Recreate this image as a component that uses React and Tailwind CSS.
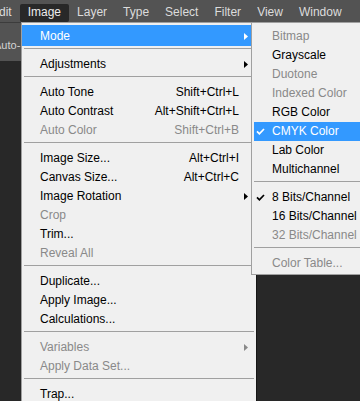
import React from 'react';

// top menu bar entries ("Edit" is cut off by the left edge)
const barItems = ['Edit', 'Image', 'Layer', 'Type', 'Select', 'Filter', 'View', 'Window'];

const SEP = { sep: true };

const imageMenu = [
  { label: 'Mode', arrow: true, active: true },
  SEP,
  { label: 'Adjustments', arrow: true },
  SEP,
  { label: 'Auto Tone', shortcut: 'Shift+Ctrl+L' },
  { label: 'Auto Contrast', shortcut: 'Alt+Shift+Ctrl+L' },
  { label: 'Auto Color', shortcut: 'Shift+Ctrl+B', disabled: true },
  SEP,
  { label: 'Image Size...', shortcut: 'Alt+Ctrl+I' },
  { label: 'Canvas Size...', shortcut: 'Alt+Ctrl+C' },
  { label: 'Image Rotation', arrow: true },
  { label: 'Crop', disabled: true },
  { label: 'Trim...' },
  { label: 'Reveal All', disabled: true },
  SEP,
  { label: 'Duplicate...' },
  { label: 'Apply Image...' },
  { label: 'Calculations...' },
  SEP,
  { label: 'Variables', arrow: true, disabled: true },
  { label: 'Apply Data Set...', disabled: true },
  SEP,
  { label: 'Trap...' },
];

const modeMenu = [
  { label: 'Bitmap', disabled: true },
  { label: 'Grayscale' },
  { label: 'Duotone', disabled: true },
  { label: 'Indexed Color', disabled: true },
  { label: 'RGB Color' },
  { label: 'CMYK Color', checked: true, active: true },
  { label: 'Lab Color' },
  { label: 'Multichannel' },
  SEP,
  { label: '8 Bits/Channel', checked: true },
  { label: '16 Bits/Channel' },
  { label: '32 Bits/Channel', disabled: true },
  SEP,
  { label: 'Color Table...', disabled: true },
];

const Arrow = ({ color }) => (
  <svg width="4" height="7" viewBox="0 0 4 7">
    <polygon points="0,0 4,3.5 0,7" fill={color} />
  </svg>
);

const Check = ({ color }) => (
  <svg width="9" height="7" viewBox="0 0 9 7">
    <path d="M1 3.3 L3.4 5.8 L8 1" fill="none" stroke={color} strokeWidth="1.7" />
  </svg>
);

const Separator = () => (
  <div className="h-[9px] pt-[2px] px-[2px]">
    <div className="h-px bg-[#a0a0a0]" />
  </div>
);

const textColor = (item) =>
  item.active ? 'text-white' : item.disabled ? 'text-[#898989]' : 'text-black';

const arrowColor = (item) => (item.active ? '#ffffff' : item.disabled ? '#898989' : '#000000');

const MainMenu = () => (
  <div className="absolute left-[21px] top-[22px] w-[236px] h-[400px] bg-[#f0f0f0] border-l border-t border-[#a0a0a0] border-r-[#161616] border-r pt-[2px]">
    {imageMenu.map((item, i) =>
      item.sep ? (
        <Separator key={i} />
      ) : (
        <div
          key={i}
          className={`flex items-center ${item.active ? 'h-[21px] pt-[2px] bg-[#3399ff]' : 'h-[19px]'} pl-[18px] ${textColor(item)}`}
        >
          <span className="flex-1 leading-[19px]">{item.label}</span>
          {item.shortcut && <span className="leading-[19px]">{item.shortcut}</span>}
          <div className="w-[17px] flex pl-[5px]">{item.arrow && <Arrow color={arrowColor(item)} />}</div>
        </div>
      )
    )}
  </div>
);

const ModeMenu = () => (
  <div className="absolute left-[251px] top-[22px] w-[120px] bg-[#f0f0f0] border border-[#a0a0a0] pt-[4px] pb-[1px]">
    {modeMenu.map((item, i) =>
      item.sep ? (
        <Separator key={i} />
      ) : (
        <div
          key={i}
          className={`flex items-center h-[19px] ml-[2px] pl-[2px] ${item.active ? 'bg-[#3399ff]' : ''} ${textColor(item)}`}
        >
          <div className="w-[16px] flex">{item.checked && <Check color={item.active ? '#ffffff' : '#000000'} />}</div>
          <span className="leading-[19px] whitespace-nowrap">{item.label}</span>
        </div>
      )
    )}
  </div>
);

export default function App() {
  return (
    <div className="relative w-[360px] h-[401px] overflow-hidden bg-[#282828] font-['Liberation_Sans',Arial,sans-serif] text-[12px]">
      {/* application menu bar */}
      <div className="flex h-[22px] bg-[#535353] whitespace-nowrap">
        {barItems.map((name, i) => (
          <div
            key={name}
            className={`mt-[4px] h-[18px] px-[8px] leading-[16px] rounded-[2px] text-[#dcdcdc] ${i === 0 ? '-ml-[17px]' : ''} ${name === 'Image' ? 'bg-[#282828] text-[#ececec]' : ''}`}
          >
            {name}
          </div>
        ))}
      </div>

      {/* options bar, the rest of it sits under the open menu */}
      <div className="h-[39px] bg-[#535353] border-t border-[#3c3c3c] pt-[15px] whitespace-nowrap">
        <span className="block -ml-[6px] text-[11px] leading-[14px] text-[#d4d4d4]">Auto-</span>
      </div>

      <MainMenu />
      <ModeMenu />
    </div>
  );
}
